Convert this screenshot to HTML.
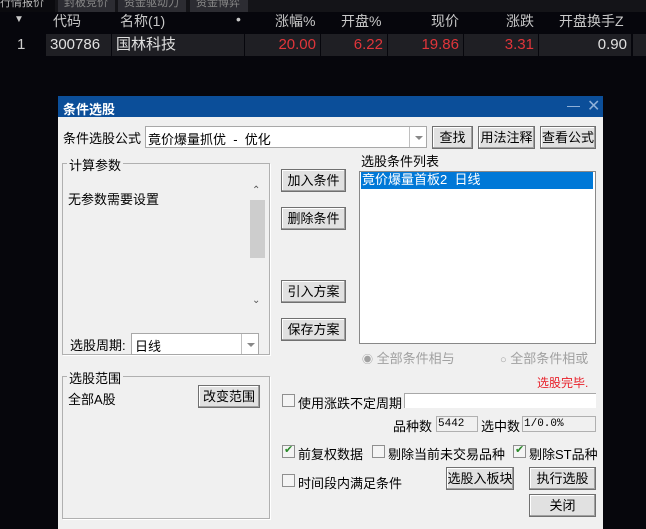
<!DOCTYPE html><html><head><meta charset="utf-8"><style>
*{margin:0;padding:0;box-sizing:border-box}
body{width:646px;height:529px;background:#06060c;position:relative;overflow:hidden;font-family:"Liberation Sans","Noto Sans CJK SC",sans-serif;font-size:12px}
.a{position:absolute;white-space:nowrap}
.hd{color:#c8c8c8;font-size:14px;top:11px}
.cell{position:absolute;top:34px;height:22px;background:#1f1f24;color:#e0e0e0;font-size:15px;line-height:22px;padding:0 4px}
.r{color:#e0353a;text-align:right}
.t{color:#000;font-size:12px}
.btn{position:absolute;background:#e1e1e1;border:1px solid #707070;box-shadow:inset -1px -1px 0 #a0a0a0,inset 1px 1px 0 #fff;text-align:center;font-size:13px;color:#000;line-height:21px}
.box{position:absolute;background:#fff;border:1px solid #a8a8a8}
.grp{position:absolute;border:1px solid #b0b0b0;box-shadow:1px 1px 0 #fff}
.gl{position:absolute;background:#f0f0f0;padding:0 2px;font-size:13px;top:-9px;left:4px}
.cb{position:absolute;width:13px;height:13px;border:1px solid #8f8f8f;background:#f4f4f4}
.ck::after{content:"✔";position:absolute;left:1px;top:-3px;font-size:11px;color:#2a8a2a}
.dd{position:absolute;right:0;top:0;width:17px;height:100%;border-left:1px solid #c0c0c0;background:#fff}
.dd::after{content:"";position:absolute;left:5px;top:9px;border:4px solid transparent;border-top:4px solid #888}
</style></head><body>
<div class="a" style="left:0;top:0;width:646px;height:12px;background:#141418"></div>
<div class="a" style="left:0;top:0;width:55px;height:12px;background:#0a0a0e;color:#bbb;font-size:11px;line-height:6px">行情报价</div>
<div class="a" style="left:58px;top:0;width:57px;height:12px;background:#2c2c32;color:#888;font-size:11px;line-height:6px;padding-left:6px">封板竞价</div>
<div class="a" style="left:118px;top:0;width:68px;height:12px;background:#2c2c32;color:#888;font-size:11px;line-height:6px;padding-left:6px">资金驱动力</div>
<div class="a" style="left:190px;top:0;width:58px;height:12px;background:#2c2c32;color:#888;font-size:11px;line-height:6px;padding-left:6px">资金博弈</div>
<div class="a hd" style="left:14px;top:14px;font-size:10px">▼</div>
<div class="a hd" style="left:53px">代码</div>
<div class="a hd" style="left:120px">名称(1)</div>
<div class="a hd" style="left:236px">•</div>
<div class="a hd" style="left:275px">涨幅%</div>
<div class="a hd" style="left:341px">开盘%</div>
<div class="a hd" style="left:431px">现价</div>
<div class="a hd" style="left:506px">涨跌</div>
<div class="a hd" style="left:559px">开盘换手Z</div>
<div class="a" style="left:17px;top:34px;color:#ccc;font-size:15px;line-height:22px">1</div>
<div class="cell" style="left:46px;width:65px">300786</div>
<div class="cell" style="left:112px;width:132px">国林科技</div>
<div class="cell r" style="left:245px;width:75px">20.00</div>
<div class="cell r" style="left:321px;width:66px">6.22</div>
<div class="cell r" style="left:388px;width:75px">19.86</div>
<div class="cell r" style="left:464px;width:74px">3.31</div>
<div class="cell" style="left:539px;width:92px;text-align:right">0.90</div>
<div class="cell" style="left:633px;width:13px"></div>

<div class="a" style="left:58px;top:96px;width:545px;height:433px;background:#f0f0f0"></div>
<div class="a" style="left:58px;top:96px;width:545px;height:21px;background:#0b4e99"></div>
<div class="a" style="left:63px;top:99px;color:#fff;font-weight:bold;font-size:13px">条件选股</div>
<div class="a" style="left:567px;top:106px;width:13px;height:1px;background:#8fb0d8"></div>
<div class="a" style="left:587px;top:96px;color:#8fb0d8;font-size:16px">✕</div>

<div class="a t" style="left:63px;top:128px;font-size:13px">条件选股公式</div>
<div class="box" style="left:145px;top:126px;width:282px;height:22px"><span class="a" style="left:2px;top:2px;font-size:13px">竟价爆量抓优 &nbsp;- &nbsp;优化</span><div class="dd"></div></div>
<div class="btn" style="left:432px;top:126px;width:41px;height:23px">查找</div>
<div class="btn" style="left:478px;top:126px;width:57px;height:23px">用法注释</div>
<div class="btn" style="left:540px;top:126px;width:56px;height:23px">查看公式</div>

<div class="grp" style="left:62px;top:163px;width:208px;height:192px"><span class="gl">计算参数</span></div>
<div class="a t" style="left:68px;top:189px;font-size:13px">无参数需要设置</div>
<div class="a" style="left:249px;top:185px;width:16px;height:122px;background:#f0f0f0"></div>
<div class="a" style="left:250px;top:200px;width:15px;height:58px;background:#cdcdcd"></div>
<div class="a" style="left:252px;top:185px;color:#555;font-size:10px">⌃</div>
<div class="a" style="left:252px;top:295px;color:#555;font-size:10px">⌄</div>
<div class="a t" style="left:70px;top:335px;font-size:13px">选股周期:</div>
<div class="box" style="left:131px;top:333px;width:128px;height:22px"><span class="a" style="left:3px;top:2px;font-size:13px">日线</span><div class="dd"></div></div>

<div class="btn" style="left:281px;top:169px;width:65px;height:23px">加入条件</div>
<div class="btn" style="left:281px;top:207px;width:65px;height:23px">删除条件</div>
<div class="btn" style="left:281px;top:280px;width:65px;height:23px">引入方案</div>
<div class="btn" style="left:281px;top:318px;width:65px;height:23px">保存方案</div>

<div class="a t" style="left:361px;top:151px;font-size:13px">选股条件列表</div>
<div class="box" style="left:359px;top:171px;width:237px;height:173px;border-color:#888"></div>
<div class="a" style="left:361px;top:172px;width:232px;height:17px;background:#0078d7;color:#fff;font-size:13px;line-height:16px;padding-left:1px">竟价爆量首板2 &nbsp;日线</div>
<div class="a" style="left:362px;top:348px;color:#a0a0a0;font-size:13px"><span style="font-size:11px">◉</span> 全部条件相与</div>
<div class="a" style="left:500px;top:348px;color:#a0a0a0;font-size:13px"><span style="font-size:11px">○</span> 全部条件相或</div>
<div class="a" style="left:537px;top:374px;color:#e8202a;font-size:12px">选股完毕.</div>

<div class="grp" style="left:62px;top:376px;width:208px;height:143px"><span class="gl">选股范围</span></div>
<div class="a t" style="left:68px;top:389px;font-size:13px">全部A股</div>
<div class="btn" style="left:198px;top:385px;width:62px;height:23px">改变范围</div>

<div class="cb" style="left:282px;top:394px"></div>
<div class="a t" style="left:298px;top:393px;font-size:13px">使用涨跌不定周期</div>
<div class="box" style="left:404px;top:393px;width:192px;height:15px;border-width:1px 0 0 1px"></div>
<div class="a t" style="left:393px;top:416px;font-size:13px">品种数</div>
<div class="a" style="left:436px;top:416px;width:42px;height:16px;border:1px solid #b0b0b0;font-size:11px;line-height:14px;padding-left:1px;font-family:'Liberation Mono',monospace">5442</div>
<div class="a t" style="left:481px;top:416px;font-size:13px">选中数</div>
<div class="a" style="left:522px;top:416px;width:74px;height:16px;border:1px solid #b0b0b0;font-size:11px;line-height:14px;padding-left:1px;font-family:'Liberation Mono',monospace">1/0.0%</div>

<div class="cb ck" style="left:282px;top:445px"></div>
<div class="a t" style="left:298px;top:444px;font-size:13px">前复权数据</div>
<div class="cb" style="left:372px;top:445px"></div>
<div class="a t" style="left:388px;top:444px;font-size:13px">剔除当前未交易品种</div>
<div class="cb ck" style="left:513px;top:445px"></div>
<div class="a t" style="left:529px;top:444px;font-size:13px">剔除ST品种</div>

<div class="cb" style="left:282px;top:474px"></div>
<div class="a t" style="left:298px;top:473px;font-size:13px">时间段内满足条件</div>
<div class="btn" style="left:446px;top:467px;width:68px;height:23px">选股入板块</div>
<div class="btn" style="left:529px;top:467px;width:67px;height:23px">执行选股</div>
<div class="btn" style="left:529px;top:494px;width:67px;height:23px">关闭</div>
</body></html>
